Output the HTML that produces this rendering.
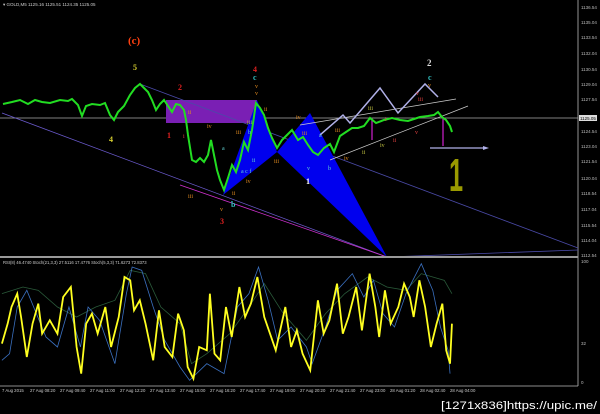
<!DOCTYPE html>
<html><head><meta charset="utf-8"><style>
html,body{margin:0;padding:0;background:#000;width:600px;height:414px;overflow:hidden}
svg{display:block;font-family:"Liberation Sans",sans-serif}
</style></head><body>
<svg width="600" height="414" viewBox="0 0 600 414" xmlns="http://www.w3.org/2000/svg">
<rect width="600" height="414" fill="#000"/>
<text x="3" y="6" fill="#ccc" font-size="4.5">▾ GOLD,M5  1125.16 1125.51 1124.35 1125.05</text>
<line x1="578" y1="0" x2="578" y2="386" stroke="#bbb" stroke-width="0.8"/>
<g fill="#bbb" font-size="4.5">
<text x="581" y="9">1136.54</text><text x="581" y="24">1135.04</text><text x="581" y="39">1133.54</text><text x="581" y="55">1132.04</text><text x="581" y="71">1130.54</text><text x="581" y="86">1129.04</text><text x="581" y="101">1127.54</text><text x="581" y="133">1124.54</text><text x="581" y="148">1123.04</text><text x="581" y="163">1121.54</text><text x="581" y="180">1120.04</text><text x="581" y="195">1118.54</text><text x="581" y="211">1117.04</text><text x="581" y="227">1115.54</text><text x="581" y="242">1114.04</text><text x="581" y="257">1112.54</text>
<text x="581" y="263">100</text><text x="581" y="345">32</text><text x="581" y="384">0</text>
</g>
<rect x="579" y="115" width="18" height="6" fill="#ddd"/><text x="580" y="120" font-size="4.5" fill="#000">1125.05</text>
<line x1="0" y1="118" x2="578" y2="118" stroke="#aaa" stroke-width="0.7"/>
<rect x="166" y="100" width="91" height="23" fill="#7a1fb4"/>
<line x1="2" y1="113" x2="387" y2="257" stroke="#6a5acd" stroke-width="0.8"/>
<line x1="180" y1="185" x2="387" y2="257" stroke="#d030d0" stroke-width="0.8"/>
<line x1="140" y1="84" x2="578" y2="248" stroke="#4a4aa8" stroke-width="0.8"/>
<line x1="387" y1="257" x2="578" y2="250" stroke="#4a4aa8" stroke-width="0.8"/>
<polygon points="223,195 257,100 277,152" fill="#0000ee"/>
<polygon points="277,152 310,113 387,257" fill="#0000ee"/>
<line x1="300" y1="125" x2="456" y2="99" stroke="#ccc" stroke-width="0.7"/>
<line x1="330" y1="160" x2="468" y2="106" stroke="#ccc" stroke-width="0.7"/>
<polyline points="320,135 343,115 350,123 380,88 398,113 425,84 438,97" fill="none" stroke="#b0b0e8" stroke-width="1.5"/>
<line x1="430" y1="148" x2="485" y2="148" stroke="#b0b0e8" stroke-width="1.3"/><polygon points="483,146 489,148 483,150" fill="#b0b0e8"/>
<line x1="443" y1="118" x2="443" y2="146" stroke="#d020d0" stroke-width="1.2"/>
<line x1="372" y1="118" x2="372" y2="140" stroke="#d020d0" stroke-width="1.2"/>
<text x="0" y="0" font-size="46" font-weight="bold" fill="#9a9a00" transform="translate(449,191) scale(0.55,1)">1</text>
<polyline fill="none" stroke="#22dd22" stroke-width="2" points="3,104 12,102 20,100 28,104 35,100 42,102 50,103 60,100 68,101 72,99 78,105 82,116 86,106 92,104 100,105 105,103 110,115 114,120 118,112 124,106 130,95 135,88 140,84 144,88 148,92 152,100 156,110 160,104 164,100 168,106 172,112 176,104 180,105 184,110 186,120 188,135 192,160 196,162 200,158 204,162 208,155 211,140 214,155 217,170 220,180 224,190 228,178 232,165 236,172 240,160 244,142 248,150 252,130 256,103 260,108 264,115 268,128 272,138 277,148 282,140 287,135 292,130 298,140 303,137 308,145 313,152 318,155 324,148 330,144 334,152 340,136 346,132 352,128 358,128 364,126 370,118 376,123 384,120 392,118 400,120 408,121 414,119 420,117 428,116 434,115 438,112 442,117 446,120 450,126 452,132"/>
<g font-size="8" font-family="Liberation Serif,serif" font-weight="bold">
<text x="128" y="44" fill="#ff4010" font-size="11">(c)</text>
<text x="133" y="70" fill="#d8d030">5</text>
<text x="109" y="142" fill="#d8d030">4</text>
<text x="178" y="90" fill="#e02020">2</text>
<text x="167" y="138" fill="#e02020">1</text>
<text x="253" y="72" fill="#e02020">4</text>
<text x="253" y="80" fill="#30c0c0">c</text>
<text x="220" y="224" fill="#e02020">3</text>
<text x="231" y="207" fill="#30c0c0">b</text>
<text x="306" y="184" fill="#fff">1</text>
<text x="428" y="80" fill="#30c0c0">c</text>
<text x="427" y="66" fill="#ddd" font-size="9">2</text>
</g>
<g font-size="6" fill="#e08a20" font-family="Liberation Serif,serif">
<text x="188" y="114">ii</text><text x="207" y="128">iv</text><text x="236" y="134">iii</text><text x="188" y="198">iii</text><text x="264" y="111">ii</text><text x="296" y="119">iv</text><text x="274" y="163">iii</text><text x="246" y="183">iv</text><text x="232" y="195">ii</text><text x="302" y="135">iii</text><text x="344" y="160">iv</text><text x="335" y="132">iii</text>
<text x="255" y="88">v</text><text x="255" y="95">v</text><text x="428" y="87">v</text><text x="220" y="211">v</text>
</g>
<g font-size="6" fill="#c0c040" font-family="Liberation Serif,serif"><text x="368" y="110">iii</text><text x="362" y="154">ii</text><text x="380" y="147">iv</text><text x="247" y="124">iii</text></g>
<g font-size="6" fill="#e04040" font-family="Liberation Serif,serif"><text x="418" y="101">iii</text><text x="416" y="95">v</text><text x="393" y="142">ii</text><text x="385" y="121">i</text><text x="415" y="134">v</text><text x="183" y="138">i</text></g>
<g font-size="6" fill="#60d0d0" font-family="Liberation Serif,serif"><text x="222" y="150">a</text><text x="248" y="134">b</text><text x="241" y="173">a c f</text><text x="252" y="162">ii</text><text x="307" y="170">v</text><text x="328" y="170">b</text><text x="319" y="137">a</text></g>
<rect x="0" y="256" width="578" height="2" fill="#999"/>
<text x="3" y="264" fill="#ccc" font-size="4.2">RSI(8) 46.4740  Stoch(21,3,3) 27.5116 17.4776  Stoch(5,3,3) 71.6273 72.8373</text>
<line x1="0" y1="386" x2="578" y2="386" stroke="#bbb" stroke-width="0.8"/>
<g transform="translate(0,207) scale(0.383,0.3333)" fill="none">
<polyline vector-effect="non-scaling-stroke" stroke="#2a5a3a" stroke-width="0.8" points="5,260 60,240 100,250 150,300 200,330 250,300 300,280 340,190 380,200 420,300 470,350 500,470 540,440 600,380 650,300 690,230 740,320 800,400 850,320 900,260 960,210 1010,240 1060,250 1100,200 1160,220 1180,260"/>
<polyline vector-effect="non-scaling-stroke" stroke="#3a70c0" stroke-width="0.8" points="5,460 25,440 45,300 70,250 95,320 120,390 150,420 180,300 210,420 230,300 260,340 300,470 330,260 345,180 370,190 400,300 430,400 470,480 495,520 540,470 585,500 620,300 650,260 675,180 700,280 725,400 760,360 800,420 815,470 850,360 880,250 920,200 950,270 975,220 1000,320 1030,360 1060,260 1100,170 1130,250 1150,360 1170,430 1175,500"/>
<polyline vector-effect="non-scaling-stroke" stroke="#ffff20" stroke-width="1.8" points="5,410 20,350 30,300 45,260 55,330 70,450 85,350 100,290 110,380 130,340 150,380 165,270 185,240 200,420 212,500 225,350 240,320 255,380 275,300 290,420 310,330 325,210 340,220 350,310 365,280 380,350 400,460 415,310 430,420 450,450 465,320 480,370 490,480 505,515 520,420 540,430 548,260 560,440 575,460 590,300 605,390 625,240 640,330 655,290 672,210 690,330 705,380 720,430 745,300 760,420 775,370 790,440 810,490 830,280 845,380 860,340 880,230 895,380 910,330 930,240 945,370 965,200 980,300 990,390 1005,250 1020,350 1040,300 1055,230 1070,270 1080,330 1095,220 1110,300 1125,420 1140,350 1155,290 1165,430 1175,470 1180,350"/>
</g>
<g fill="#ccc" font-size="4.3">
<text x="2" y="392">7 Aug 2015</text><text x="30" y="392">27 Aug 08:20</text><text x="60" y="392">27 Aug 09:40</text><text x="90" y="392">27 Aug 11:00</text><text x="120" y="392">27 Aug 12:20</text><text x="150" y="392">27 Aug 13:40</text><text x="180" y="392">27 Aug 15:00</text><text x="210" y="392">27 Aug 16:20</text><text x="240" y="392">27 Aug 17:40</text><text x="270" y="392">27 Aug 19:00</text><text x="300" y="392">27 Aug 20:20</text><text x="330" y="392">27 Aug 21:40</text><text x="360" y="392">27 Aug 23:00</text><text x="390" y="392">28 Aug 01:20</text><text x="420" y="392">28 Aug 02:40</text><text x="450" y="392">28 Aug 04:00</text>
</g>
<text x="441" y="409" fill="#fff" font-size="11" font-family="Liberation Sans Narrow,Liberation Sans,sans-serif" textLength="156" lengthAdjust="spacingAndGlyphs">[1271x836]https://upic.me/</text>
</svg>
</body></html>
